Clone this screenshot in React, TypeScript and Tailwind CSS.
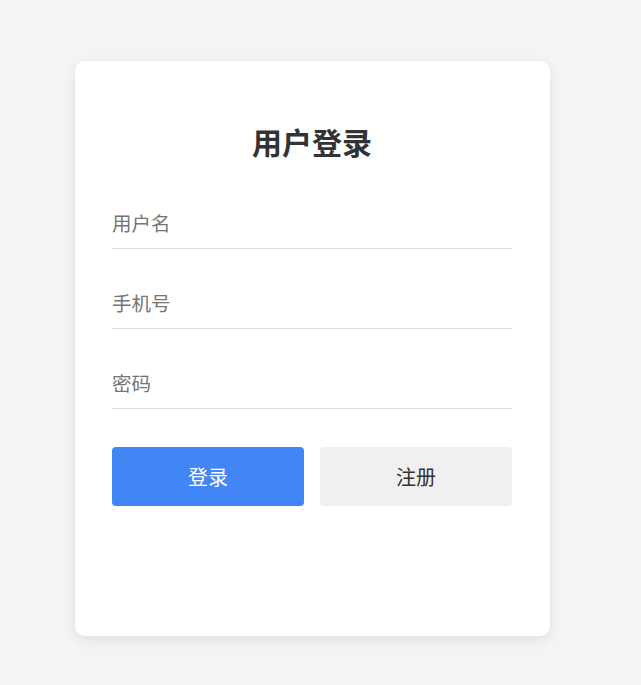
import React from "react";

export default function App() {
  const font = { fontFamily: '"Noto Sans CJK SC", "Noto Sans", sans-serif' };
  return (
    <div className="min-h-[685px] w-full bg-[#f4f4f4] pt-[61px]" style={font}>
      <div className="ml-[75px] flex h-[575px] w-[475px] flex-col rounded-[10px] bg-white pl-[37px] pr-[38px] pt-[58px] shadow-[0_4px_14px_rgba(0,0,0,0.08)]">
        <h1 className="text-center text-[30px] font-bold leading-[45px] text-[#333]">用户登录</h1>
        <div className="mt-[35px] flex flex-col gap-[30px]">
          {["用户名", "手机号", "密码"].map((p) => (
            <input
              key={p}
              placeholder={p}
              type={p === "密码" ? "password" : "text"}
              className="h-[50px] w-full border-b border-[#dddddd] bg-transparent pb-[3px] text-[19.5px] text-[#333] outline-none placeholder:text-[#757575]"
            />
          ))}
        </div>
        <div className="mt-[38px] grid grid-cols-2 gap-4">
          <button className="h-[59px] rounded-[4px] bg-[#4285f4] text-[20px] text-white">登录</button>
          <button className="h-[59px] rounded-[4px] bg-[#f0f0f0] text-[20px] text-[#333]">注册</button>
        </div>
      </div>
    </div>
  );
}
